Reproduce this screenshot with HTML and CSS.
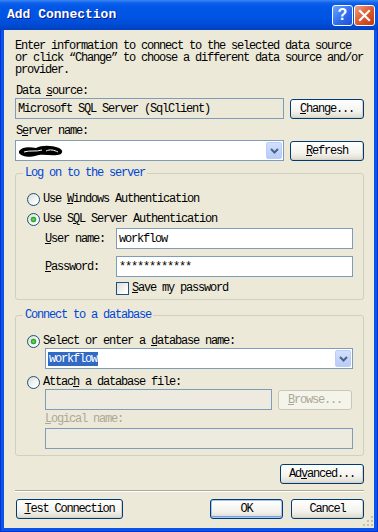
FILE: index.html
```html
<!DOCTYPE html>
<html lang="en">
<head>
    <meta charset="UTF-8">
    <meta name="viewport" content="width=device-width, initial-scale=1.0">
    <title>Add Connection</title>
    <link rel="stylesheet" href="styles.css">
</head>
<body>
    <div class="window">
        <div class="titlebar">
            <span class="title">Add Connection</span>
            <div class="caption-buttons">
                <span class="cap-btn help">?</span>
                <span class="cap-btn close">
                    <svg width="13" height="13" viewBox="0 0 13 13"><path d="M2 2 L11 11 M11 2 L2 11" stroke="#fff" stroke-width="2.2" stroke-linecap="square"/></svg>
                </span>
            </div>
        </div>

        <div class="client">
            <p class="intro">Enter information to connect to the selected data source<br>or click “Change” to choose a different data source and/or<br>provider.</p>

            <div class="label gap-9">Data <u>s</u>ource:</div>
            <div class="row gap-1">
                <div class="textbox readonly"><span>Microsoft SQL Server (SqlClient)</span></div>
                <button class="btn side"><u>C</u>hange...</button>
            </div>

            <div class="label gap-6">S<u>e</u>rver name:</div>
            <div class="row gap-3">
                <div class="combo">
                    <svg class="scribble" width="46" height="14" viewBox="0 0 46 14">
                        <path d="M1 7 C5 2 12 3 18 4 C24 1 33 1 41 4 C46 6 45 11 39 11 C31 12 24 9 17 12 C11 14 3 12 1 9 Z" fill="#000"/>
                        <path d="M6 8 C12 6 18 8 24 6 M28 7 C32 5 36 6 40 8" stroke="#fff" stroke-width="1"/>
                    </svg>
                    <span class="drop"><svg width="9" height="6" viewBox="0 0 9 6"><path d="M1 1 L4.5 4.5 L8 1" fill="none" stroke="#4D6185" stroke-width="2"/></svg></span>
                </div>
                <button class="btn side"><u>R</u>efresh</button>
            </div>

            <fieldset class="group group-logon">
                <legend>Log on to the server</legend>
                <div class="option"><span class="radio"></span><span>Use <u>W</u>indows Authentication</span></div>
                <div class="option gap-6"><span class="radio checked"></span><span>Use S<u>Q</u>L Server Authentication</span></div>
                <div class="cred gap-2">
                    <span class="cred-label"><u>U</u>ser name:</span>
                    <div class="textbox"><span>workflow</span></div>
                </div>
                <div class="cred gap-7">
                    <span class="cred-label"><u>P</u>assword:</span>
                    <div class="textbox"><span>************</span></div>
                </div>
                <div class="save gap-4"><span class="checkbox"></span><span><u>S</u>ave my password</span></div>
            </fieldset>

            <fieldset class="group group-db">
                <legend>Connect to a database</legend>
                <div class="option"><span class="radio checked"></span><span>Select or enter a <u>d</u>atabase name:</span></div>
                <div class="indent">
                    <div class="combo">
                        <span class="selected">workflow</span>
                        <span class="drop"><svg width="9" height="6" viewBox="0 0 9 6"><path d="M1 1 L4.5 4.5 L8 1" fill="none" stroke="#4D6185" stroke-width="2"/></svg></span>
                    </div>
                </div>
                <div class="option gap-6"><span class="radio"></span><span>Attac<u>h</u> a database file:</span></div>
                <div class="indent row">
                    <div class="textbox disabled"></div>
                    <button class="btn side" disabled><u>B</u>rowse...</button>
                </div>
                <div class="indent label muted gap-3"><u>L</u>ogical name:</div>
                <div class="indent gap-3">
                    <div class="textbox disabled"></div>
                </div>
            </fieldset>

            <button class="btn advanced">Ad<u>v</u>anced...</button>

            <div class="separator"></div>

            <div class="footer">
                <button class="btn test"><u>T</u>est Connection</button>
                <div class="footer-right">
                    <button class="btn default">OK</button>
                    <button class="btn">Cancel</button>
                </div>
            </div>

            <svg class="grip" width="10" height="10" viewBox="0 0 10 10">
                <g fill="#C4C1B1">
                    <rect x="8" y="0" width="2" height="2"/>
                    <rect x="4" y="4" width="2" height="2"/><rect x="8" y="4" width="2" height="2"/>
                    <rect x="0" y="8" width="2" height="2"/><rect x="4" y="8" width="2" height="2"/><rect x="8" y="8" width="2" height="2"/>
                </g>
            </svg>
        </div>
    </div>
</body>
</html>
```

FILE: styles.css
```css
* { box-sizing: border-box; }
body {
    margin: 0;
    font-family: "Liberation Mono", "DejaVu Sans Mono", monospace;
    font-size: 12px;
    line-height: 12px;
    letter-spacing: -1.2px;
    color: #000;
    background: #fff;
}
u { text-decoration: underline; text-underline-offset: 1px; }

.window {
    width: 378px;
    height: 532px;
    display: flex;
    flex-direction: column;
    background: #0B55E6;
    box-shadow: inset 1px 0 #0831D9, inset -1px 0 #0831D9, inset 0 -1px #0831D9;
}
.titlebar {
    height: 30px;
    flex: none;
    display: flex;
    align-items: center;
    justify-content: space-between;
    padding: 0 3px 0 7px;
    background: linear-gradient(#3A86F2 0, #0E60EB 3px, #0056E6 7px, #0054E3 18px, #0049D0 26px, #0040BE 30px);
}
.title {
    color: #fff;
    font-weight: bold;
    font-size: 13px;
    letter-spacing: 0;
    text-shadow: 1px 1px 0 #0A1883;
}
.caption-buttons { display: flex; gap: 1px; }
.cap-btn {
    width: 21px;
    height: 21px;
    border: 1px solid #fff;
    border-radius: 3px;
    display: flex;
    align-items: center;
    justify-content: center;
}
.help {
    background: linear-gradient(135deg, #6EA6FC, #2F6DEE 55%, #1B52D6);
    color: #fff;
    font-family: "Liberation Sans", Arial, sans-serif;
    font-weight: bold;
    font-size: 16px;
    letter-spacing: 0;
}
.close { background: linear-gradient(135deg, #F1A184, #DC5A32 50%, #C3380F); }

.client {
    flex: 1;
    position: relative;
    margin: 0 4px 4px;
    padding: 10px 10px 9px 11px;
    background: #ECE9D8;
    display: flex;
    flex-direction: column;
}
.intro { margin: 0; }
.gap-1 { margin-top: 1px; }
.gap-2 { margin-top: 2px; }
.gap-3 { margin-top: 3px; }
.gap-4 { margin-top: 4px; }
.gap-6 { margin-top: 6px; }
.gap-7 { margin-top: 7px; }
.gap-9 { margin-top: 9px; }
.label { height: 12px; padding-left: 1px; }
.muted { color: #ACA899; }

.row { display: flex; align-items: center; gap: 6px; }
.textbox {
    flex: 1;
    height: 21px;
    border: 1px solid #7F9DB9;
    background: #fff;
    padding: 0 2px;
    display: flex;
    align-items: center;
    white-space: pre;
}
.textbox.readonly { background: #ECE9D8; }
.textbox.disabled { background: #EDEBDF; }

.combo {
    flex: 1;
    height: 21px;
    border: 1px solid #7F9DB9;
    background: #fff;
    padding: 1px;
    display: flex;
    align-items: center;
}
.scribble { margin-left: 1px; }
.selected {
    margin-left: 1px;
    padding: 1px;
    background: #316AC5;
    color: #fff;
}
.drop {
    margin-left: auto;
    width: 16px;
    height: 17px;
    border: 1px solid #BBCEF9;
    border-radius: 2px;
    background: linear-gradient(#D3E0FD, #B6CBF8);
    display: flex;
    align-items: center;
    justify-content: center;
}

.btn {
    font: inherit;
    letter-spacing: inherit;
    color: #000;
    height: 20px;
    padding: 0;
    border: 1px solid #003C74;
    border-radius: 3px;
    background: linear-gradient(#FFFFFF, #F4F3EE 60%, #E3E1D6 90%, #D6D0C5);
    box-shadow: inset -1px -1px 0 #D8D2C6;
    flex: none;
}
.btn.side { width: 74px; }
.btn:disabled {
    color: #ACA899;
    border-color: #C9C7BA;
    background: #F5F4EA;
    box-shadow: none;
}
.btn.default { box-shadow: inset 0 0 0 1px #A9C5F4, inset 0 -1px 0 1px #7A9CE4; }
.advanced { width: 84px; align-self: flex-end; margin-top: 8px; }

.group {
    margin: 0;
    padding: 13px 10px 4px 11px;
    border: 1px solid #D0D0BF;
    border-radius: 3px;
    min-width: 0;
}
.group-logon { margin-top: 6px; }
.group-db { margin-top: 9px; padding-bottom: 6px; }
.group legend {
    color: #0046D5;
    padding: 0 2px;
    margin-left: -4px;
    line-height: 12px;
}
.option { height: 14px; display: flex; align-items: center; gap: 3px; }
.radio {
    width: 13px;
    height: 13px;
    flex: none;
    border: 1px solid #1C5180;
    border-radius: 50%;
    background: linear-gradient(135deg, #DCDCD3, #FFFFFF 80%);
}
.radio.checked {
    background: radial-gradient(circle, #6AE06A 0, #21A121 2.5px, transparent 3.2px), linear-gradient(135deg, #DCDCD3, #FFFFFF 80%);
}
.cred { display: flex; align-items: center; padding-left: 18px; }
.cred-label { width: 71px; flex: none; }
.save { display: flex; align-items: center; gap: 3px; height: 14px; padding-left: 89px; }
.checkbox {
    width: 13px;
    height: 13px;
    flex: none;
    border: 1px solid #1C5180;
    background: linear-gradient(135deg, #DCDCD7, #FFFFFF 85%);
}
.indent { padding-left: 18px; display: flex; }
.indent.label { display: block; height: 12px; }
.indent.row { padding-right: 1px; }

.separator {
    margin-top: 6px;
    height: 2px;
    border-top: 1px solid #ACA899;
    border-bottom: 1px solid #fff;
}
.footer { margin-top: 7px; display: flex; justify-content: space-between; }
.footer-right { display: flex; gap: 8px; }
.btn.test { width: 107px; margin-left: 1px; }
.footer-right .btn { width: 73px; }

.grip { position: absolute; right: 1px; bottom: 2px; }
```
